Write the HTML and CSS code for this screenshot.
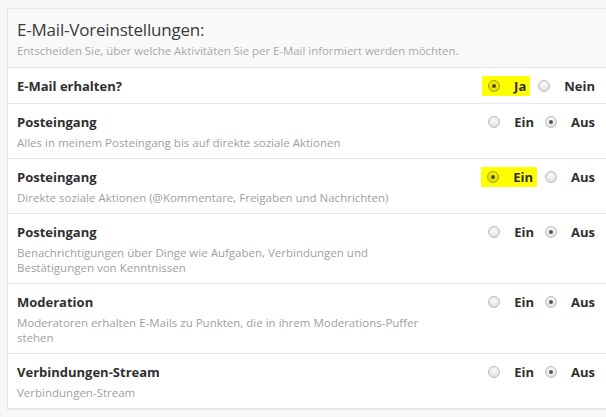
FILE: index.html
```html
<!DOCTYPE html>
<html lang="de">
<head>
<meta charset="utf-8">
<link rel="stylesheet" href="styles.css">
</head>
<body>
<div class="panel">
  <div class="panel-head">
    <h2 class="panel-title">E-Mail-Voreinstellungen:</h2>
    <p class="panel-sub">Entscheiden Sie, über welche Aktivitäten Sie per E-Mail informiert werden möchten.</p>
  </div>

  <div class="row">
    <div class="info"><div class="name">E-Mail erhalten?</div></div>
    <div class="choices">
      <span class="mark"><span class="radio on"></span><span class="lbl">Ja</span></span>
      <span class="radio"></span><span class="lbl">Nein</span>
    </div>
  </div>

  <div class="row">
    <div class="info">
      <div class="name">Posteingang</div>
      <div class="desc">Alles in meinem Posteingang bis auf direkte soziale Aktionen</div>
    </div>
    <div class="choices">
      <span class="radio"></span><span class="lbl">Ein</span>
      <span class="radio on"></span><span class="lbl">Aus</span>
    </div>
  </div>

  <div class="row">
    <div class="info">
      <div class="name">Posteingang</div>
      <div class="desc">Direkte soziale Aktionen (@Kommentare, Freigaben und Nachrichten)</div>
    </div>
    <div class="choices">
      <span class="mark"><span class="radio on"></span><span class="lbl">Ein</span></span>
      <span class="radio"></span><span class="lbl">Aus</span>
    </div>
  </div>

  <div class="row">
    <div class="info">
      <div class="name">Posteingang</div>
      <div class="desc">Benachrichtigungen über Dinge wie Aufgaben, Verbindungen und<br>Bestätigungen von Kenntnissen</div>
    </div>
    <div class="choices">
      <span class="radio"></span><span class="lbl">Ein</span>
      <span class="radio on"></span><span class="lbl">Aus</span>
    </div>
  </div>

  <div class="row">
    <div class="info">
      <div class="name">Moderation</div>
      <div class="desc">Moderatoren erhalten E-Mails zu Punkten, die in ihrem Moderations-Puffer<br>stehen</div>
    </div>
    <div class="choices">
      <span class="radio"></span><span class="lbl">Ein</span>
      <span class="radio on"></span><span class="lbl">Aus</span>
    </div>
  </div>

  <div class="row">
    <div class="info">
      <div class="name">Verbindungen-Stream</div>
      <div class="desc">Verbindungen-Stream</div>
    </div>
    <div class="choices">
      <span class="radio"></span><span class="lbl">Ein</span>
      <span class="radio on"></span><span class="lbl">Aus</span>
    </div>
  </div>
</div>
</body>
</html>
```

FILE: styles.css
```css
html, body {
  margin: 0;
  background: #f7f7f7;
  overflow: hidden;
}
body {
  padding: 8px 0 0 7px;
  font-family: "Open Sans", "Noto Sans", sans-serif;
  color: #333;
}
.panel {
  background: #fff;
  border: 1px solid #e6e6e6;
  border-right: none;
}
.panel-head {
  background: #f9f9f9;
  border-bottom: 1px solid #e6e6e6;
  padding: 10px 10px 9px 9px;
}
.panel-title {
  margin: 0;
  font-size: 17px;
  font-weight: 400;
  line-height: 22px;
  color: #3a3a3a;
  letter-spacing: -0.2px;
}
.panel-sub {
  margin: 2px 0 0;
  font-size: 11.4px;
  line-height: 15px;
  color: #a8a8a8;
}
.row {
  display: flex;
  align-items: flex-start;
  justify-content: space-between;
  padding: 9px 11px 8px 9px;
  border-bottom: 1px solid #e8e8e8;
}
.name {
  font-size: 13px;
  font-weight: 700;
  line-height: 18px;
  color: #2f2f2f;
}
.desc {
  margin-top: 4px;
  font-size: 11.5px;
  line-height: 15px;
  color: #a0a0a0;
}
.choices {
  display: flex;
  align-items: center;
  height: 18px;
}
.mark {
  display: flex;
  align-items: center;
  background: #ffff00;
  padding: 1px 4px 1px 6px;
  margin-left: -6px;
  margin-right: -4px;
  height: 18px;
  border-radius: 1px;
}
.radio {
  width: 12px;
  height: 12px;
  box-sizing: border-box;
  border-radius: 50%;
  border: 1px solid #bdbdbd;
  background: radial-gradient(circle at 50% 35%, #fbfbfb 0%, #e6e6e6 60%, #d7d7d7 100%);
  position: relative;
  flex: none;
}
.radio.on::after {
  content: "";
  position: absolute;
  left: 3px;
  top: 3px;
  width: 4px;
  height: 4px;
  border-radius: 50%;
  background: #555;
}
.mark .radio {
  border-color: #a3a300;
  background: radial-gradient(circle at 50% 35%, #f5f500 0%, #e3e300 60%, #d0d000 100%);
}
.mark .radio.on::after {
  background: #4a4a00;
}
.lbl {
  font-size: 13px;
  font-weight: 700;
  line-height: 18px;
  color: #2f2f2f;
  margin-left: 14px;
  margin-right: 11px;
}
.choices .lbl:last-child {
  margin-right: 0;
}
.mark .lbl {
  margin-right: 0;
}
.mark + .radio {
  margin-left: 12px;
}
```
